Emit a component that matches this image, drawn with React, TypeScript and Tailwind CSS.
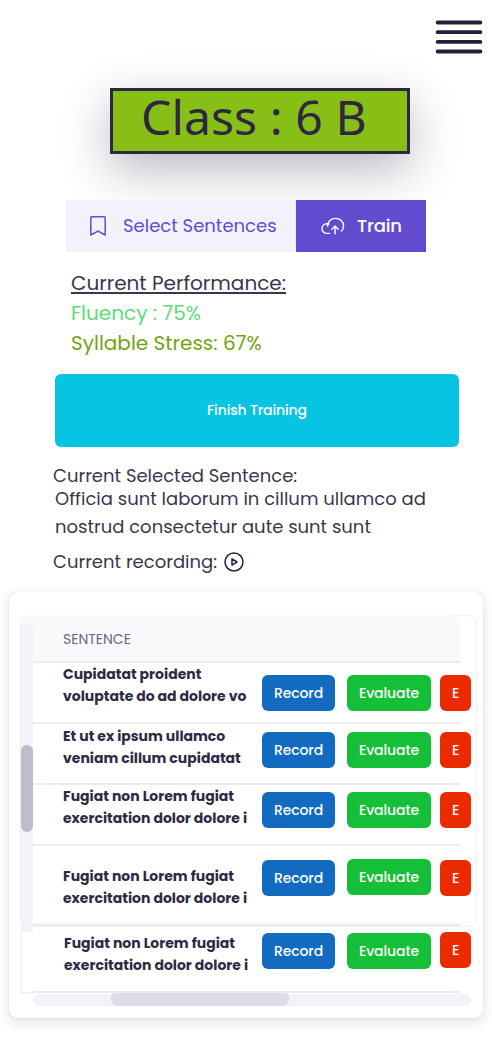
type Row = {
  lines: [string, string];
  height: string;
  text: string;
  record: string;
  evaluate: string;
  exit: string;
};

const rows: Row[] = [
  {
    lines: ["Cupidatat proident", "voluptate do ad dolore vo"],
    height: "h-[61px]",
    text: "pl-[30px] pt-0",
    record: "mt-[12px]",
    evaluate: "mt-[12px]",
    exit: "mt-[12px]",
  },
  {
    lines: ["Et ut ex ipsum ullamco", "veniam cillum cupidatat"],
    height: "h-[61px]",
    text: "pl-[30px] pt-px",
    record: "mt-2",
    evaluate: "mt-2",
    exit: "mt-2",
  },
  {
    lines: ["Fugiat non Lorem fugiat", "exercitation dolor dolore i"],
    height: "h-[61px]",
    text: "pl-[30px] pt-0",
    record: "mt-[7px]",
    evaluate: "mt-[7px]",
    exit: "mt-[7px]",
  },
  {
    lines: ["Fugiat non Lorem fugiat", "exercitation dolor dolore i"],
    height: "h-[80px]",
    text: "pl-[30px] pt-[19px]",
    record: "mt-[14px]",
    evaluate: "mt-[13px]",
    exit: "mt-[14px]",
  },
  {
    lines: ["Fugiat non Lorem fugiat", "exercitation dolor dolore i"],
    height: "h-[67px]",
    text: "pl-[31px] pt-[6px]",
    record: "mt-[7px]",
    evaluate: "mt-[7px]",
    exit: "mt-[6px]",
  },
];

const button =
  "h-9 shrink-0 rounded-md text-center text-[14px] font-medium tracking-[-0.1px] leading-9 text-white whitespace-nowrap";

function MenuIcon() {
  return (
    <svg width="48" height="36" viewBox="0 0 48 36" stroke="#26203b" strokeWidth="3.8" strokeLinecap="round">
      <path d="M2.6 4.5H45.4M2.6 14.2H45.4M2.6 23.9H45.4M2.6 33.5H45.4" />
    </svg>
  );
}

function BookmarkIcon() {
  return (
    <svg width="16" height="20" viewBox="0 0 16 20" fill="none" stroke="#624bcf" strokeWidth="1.5" strokeLinejoin="round">
      <path d="M1.6 0.8H14.4Q15.2 0.8 15.2 1.6V19L8 15.2L0.8 19V1.6Q0.8 0.8 1.6 0.8Z" />
    </svg>
  );
}

function CloudIcon() {
  return (
    <svg width="24" height="18" viewBox="0 0 24 18" fill="none" stroke="#fff" strokeWidth="1.4" strokeLinecap="round" strokeLinejoin="round">
      <path d="M8.6 16.4H6C3 16.4 1 14.3 1 11.6C1 8.9 3 6.8 6 6.8C6.7 6.8 7.4 6.9 8 7.1" />
      <path d="M6.6 9.2C6.6 4.3 10 1.4 14.4 1.4C19 1.4 22.6 4.7 22.6 9C22.6 11 21.8 12.8 20.5 14.1" />
      <path d="M14 16.8V9.5M10.8 12.2L14 9L17.2 12.2" />
    </svg>
  );
}

function PlayIcon() {
  return (
    <svg width="20" height="20" viewBox="0 0 20 20" fill="none" stroke="#26203b" strokeWidth="1.5" strokeLinejoin="round">
      <circle cx="10" cy="10" r="9" />
      <path d="M8 6.9V13.1L13 10Z" />
    </svg>
  );
}

function SentenceRow({ row }: { row: Row }) {
  return (
    <div className={`relative flex ${row.height}`}>
      <div className="absolute bottom-0 left-0 h-0.5 w-[427px] bg-[#ecebf2]" />
      <div
        className={`w-[229px] shrink-0 whitespace-nowrap text-[14px] font-bold leading-[22px] text-[#2f2a44] ${row.text}`}
      >
        <div>{row.lines[0]}</div>
        <div>{row.lines[1]}</div>
      </div>
      <button className={`${button} w-[73px] bg-[#126bbf] ${row.record}`}>Record</button>
      <button className={`${button} ml-3 w-[84px] bg-[#15bf38] ${row.evaluate}`}>Evaluate</button>
      <button className={`${button} ml-[9px] w-[31px] bg-[#eb2a00] ${row.exit}`}>E</button>
    </div>
  );
}

export default function App() {
  return (
    <main className="h-[1055px] w-[492px] overflow-hidden bg-white font-[Poppins,Inter,sans-serif] text-[#3a364d]">
      <header className="flex h-[88px] justify-end pr-[9px] pt-[18px]">
        <MenuIcon />
      </header>

      <h1 className="ml-[110px] h-[66px] w-[300px] whitespace-nowrap border-[3px] border-[#2d2840] bg-[#88bf17] pl-[28px] font-['Noto_Sans',sans-serif] text-[48px] leading-[52px] tracking-[0.1px] text-[#2d2840] shadow-[0_16px_48px_rgba(45,40,64,0.33)]">
        Class : 6 B
      </h1>

      <nav className="ml-[66px] mt-[46px] flex h-[52px] w-[360px] whitespace-nowrap text-[18px]">
        <div className="flex w-[230px] items-center bg-[#f3f1fc] pl-6 text-[#624bcf]">
          <BookmarkIcon />
          <span className="ml-[17px] pb-0.5">Select Sentences</span>
        </div>
        <div className="flex w-[130px] items-center bg-[#624bcf] pl-[25px] font-medium text-white">
          <CloudIcon />
          <span className="ml-[12px] pb-0.5 tracking-[-0.2px]">Train</span>
        </div>
      </nav>

      <section className="ml-[71px] mt-4 whitespace-nowrap text-[20px] leading-[30px]">
        <div className="underline decoration-[1.5px] underline-offset-[2px]">Current Performance:</div>
        <div className="text-[#5edb7c]">Fluency : 75%</div>
        <div className="text-[#74a312]">Syllable Stress: 67%</div>
      </section>

      <button className="ml-[55px] mt-4 block h-[73px] w-[404px] rounded-md bg-[#06c4e2] text-[14px] font-medium tracking-[-0.12px] text-white">
        Finish Training
      </button>

      <section className="ml-[53px] mt-[15px] whitespace-nowrap text-[18px] leading-[28px]">
        <div className="h-[23px]">Current Selected Sentence:</div>
        <div className="pl-0.5">Officia sunt laborum in cillum ullamco ad</div>
        <div className="pl-0.5">nostrud consectetur aute sunt sunt</div>
        <div className="mt-[7px] flex items-center">
          <span className="w-[171px]">Current recording:</span>
          <PlayIcon />
        </div>
      </section>

      <section className="relative ml-[9px] mt-[16px] h-[426px] w-[474px] rounded-lg bg-white pl-3 pt-[23px] shadow-[0_0_1px_rgba(45,40,64,0.25),0_4px_12px_rgba(45,40,64,0.15)]">
        <div className="absolute left-[11px] top-[23px] h-[312px] w-[457px] rounded-lg border border-[#f1f1f3]" />
        <div className="relative flex items-start">
          <div className="w-3 shrink-0 rounded-tl-lg bg-[#f9f9fb] pt-[10px]">
            <div className="h-[307px] bg-[#f3f2f8] pt-[120px]">
              <div className="h-[87px] rounded-full bg-[#c0bcce]" />
            </div>
            <div className="h-[62px] border-b-2 border-l border-[#f1f1f5] bg-white" />
          </div>
          <div className="w-[438px]">
            <div className="h-12 w-[427px] rounded-tr-lg border-b-2 border-[#ecebf2] bg-[#f9f9fb] pl-[30px] text-[14px] font-normal leading-[48px] text-[#6a657e]">
              SENTENCE
            </div>
            {rows.map((row, i) => (
              <SentenceRow key={i} row={row} />
            ))}
            <div className="mt-px h-3 rounded-full bg-[#f3f2f8]">
              <div className="relative -top-px ml-[78px] h-[13px] w-[178px] rounded-b-[7px] rounded-t-[4px] bg-[#dedce8]" />
            </div>
          </div>
        </div>
      </section>
    </main>
  );
}
